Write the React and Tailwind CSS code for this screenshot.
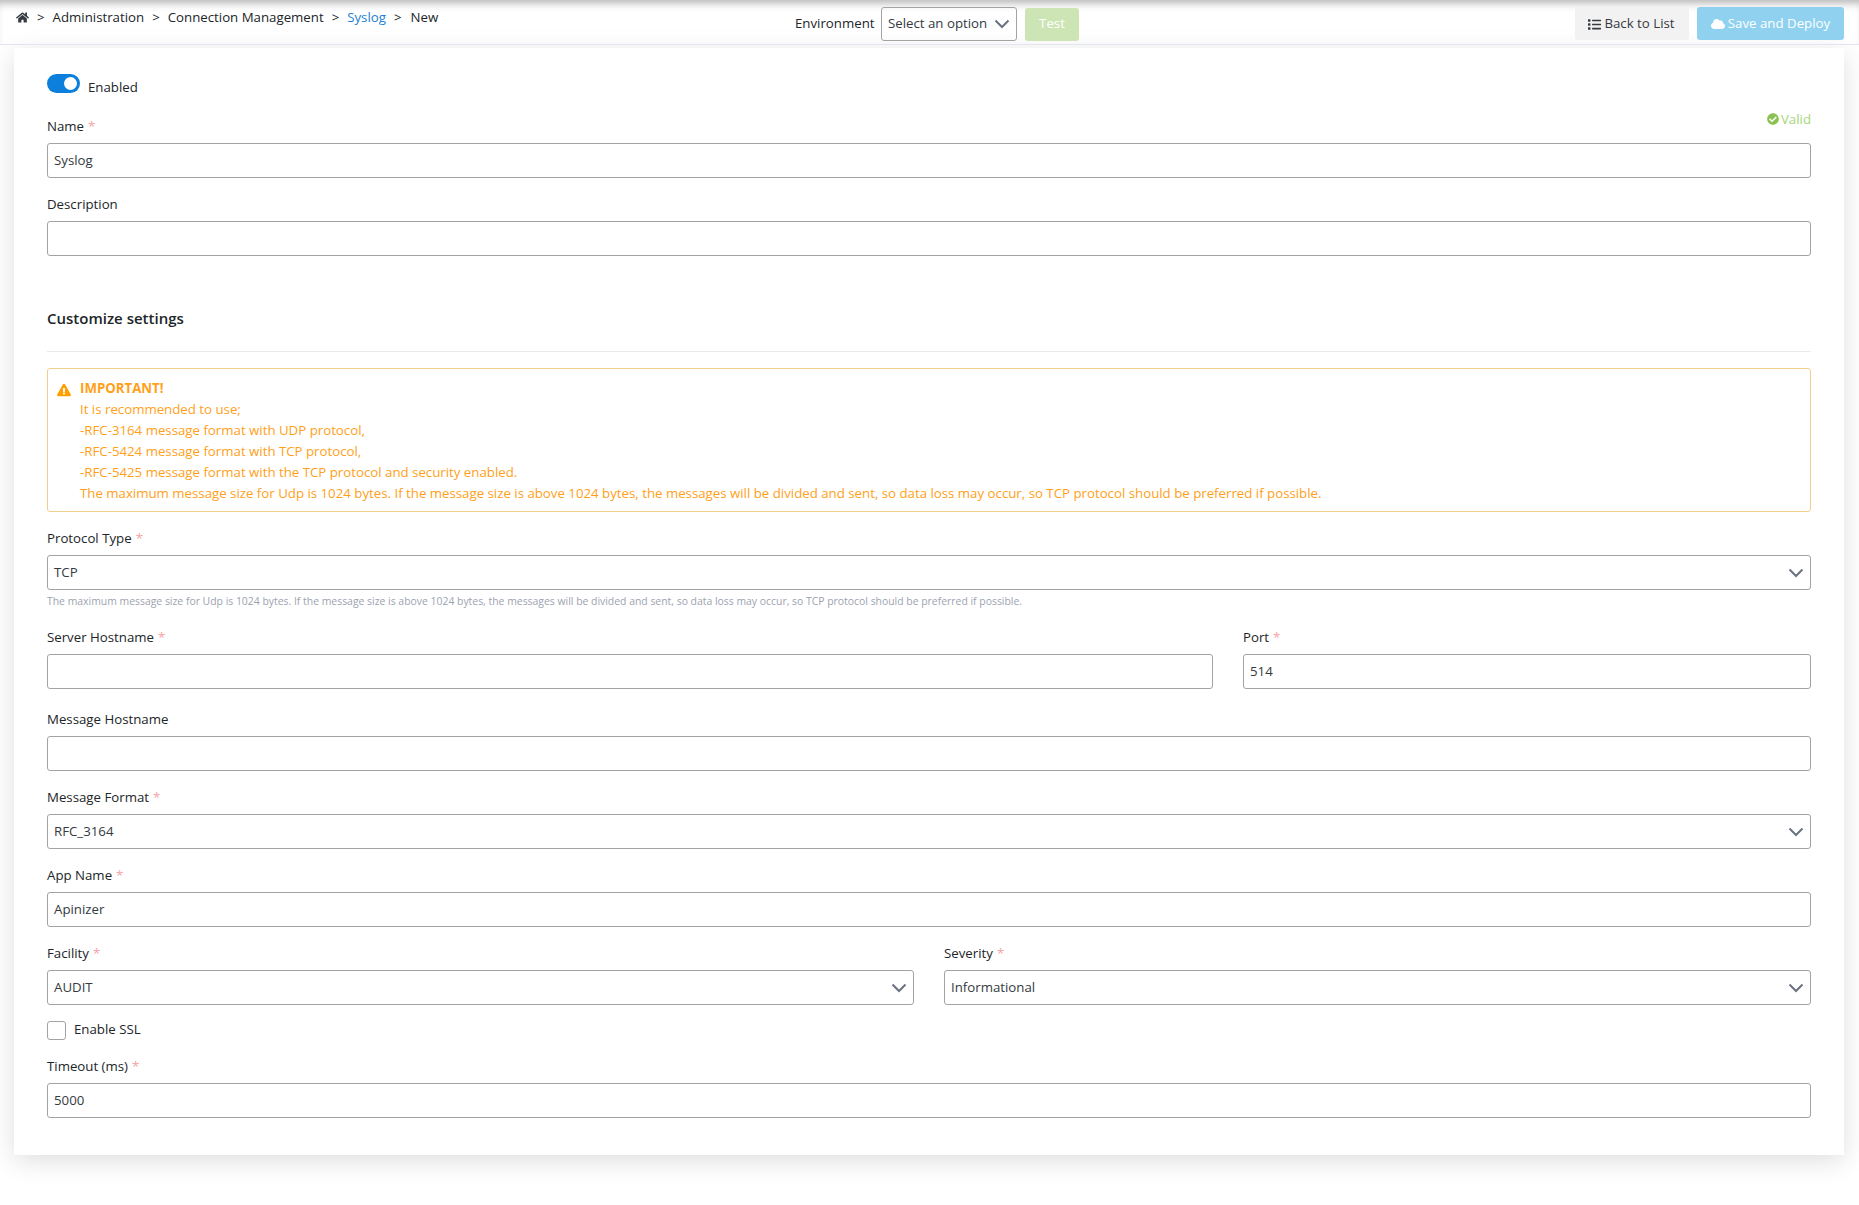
import React from 'react';
import { FaHome, FaList, FaCloud, FaCheckCircle, FaExclamationTriangle } from 'react-icons/fa';

const Chevron = () => (
  <svg width="16" height="10" viewBox="0 0 16 10" fill="none" stroke="#6b7280" strokeWidth="2">
    <path d="M1.5 1.5 8 8l6.5-6.5" />
  </svg>
);

const Label = ({ children, required }) => (
  <label className="block h-5 mb-[7px] leading-5 text-[#212529]">
    {children}
    {required && <span className="ml-1 text-[#f5a3a3]">*</span>}
  </label>
);

const Input = ({ value }) => (
  <div className="h-[35px] px-[6px] pt-[1px] flex items-center border border-[#a3a3a3] rounded-[3px] bg-white text-[#343a40]">
    {value}
  </div>
);

const Select = ({ value }) => (
  <div className="h-[35px] pl-[6px] pr-[6px] flex items-center justify-between border border-[#a3a3a3] rounded-[3px] bg-white text-[#343a40]">
    <span className="pt-[1px]">{value}</span>
    <Chevron />
  </div>
);

const Field = ({ label, required, value, select, className = 'mb-4' }) => (
  <div className={className}>
    <Label required={required}>{label}</Label>
    {select ? <Select value={value} /> : <Input value={value} />}
  </div>
);

const Sep = () => <span className="mx-[8px] text-[#212529]">&gt;</span>;

export default function App() {
  return (
    <div className="min-h-[1205px] bg-white text-[13.25px] font-['Open_Sans',sans-serif] text-[#212529]">
      {/* Top bar */}
      <div className="relative h-[45px] border-b border-[#e2e5ec] shadow-[inset_0_8px_8px_-5px_rgba(0,0,0,0.3)]">
        <div className="absolute left-[16px] top-[7px] flex items-center leading-5">
          <FaHome className="w-[13px] h-[13px] text-[#343a40]" />
          <Sep />
          <span>Administration</span>
          <Sep />
          <span>Connection Management</span>
          <Sep />
          <span className="text-[#1b7fd6]">Syslog</span>
          <Sep />
          <span className="ml-[1px]">New</span>
        </div>
        <div className="absolute left-[795px] top-[7px] flex items-center">
          <span className="w-[86px]">Environment</span>
          <div className="w-[136px] h-[34px] pl-[6px] pr-[6px] flex items-center justify-between border border-[#a3a3a3] rounded-[3px]">
            <span className="text-[#343a40]">Select an option</span>
            <Chevron />
          </div>
          <button className="ml-2 w-[54px] h-[33px] rounded-[3px] bg-[#cde5b5] text-white">Test</button>
        </div>
        <div className="absolute right-[15px] top-[7px] flex items-center gap-2">
          <button className="w-[114px] h-[33px] pt-[1px] pr-[1px] rounded-[3px] bg-[#f2f2f2] text-[#343a40] flex items-center justify-center gap-[3px]">
            <FaList className="w-[13px] h-[13px]" />
            Back to List
          </button>
          <button className="w-[147px] h-[33px] pt-[1px] rounded-[3px] bg-[#90d1f0] text-white flex items-center justify-center gap-[3px]">
            <FaCloud className="w-[14px] h-[14px]" />
            Save and Deploy
          </button>
        </div>
      </div>

      {/* Card */}
      <div className="ml-[14px] mr-[15px] mt-[3px] h-[1107px] px-[33px] pt-[28px] bg-white shadow-[0_6px_24px_rgba(0,0,0,0.13)]">
        <div className="flex items-center h-5 mb-[20px]">
          <div className="w-[33px] h-[19px] rounded-full bg-[#0c7fdc] relative -top-[3px]">
            <div className="absolute right-[3px] top-[3px] w-[13px] h-[13px] rounded-full bg-white" />
          </div>
          <span className="ml-2 relative top-[2px]">Enabled</span>
        </div>

        <div className="mb-4">
          <div className="flex justify-between">
            <Label required>Name</Label>
            <span className="relative -top-[7px] h-5 leading-5 flex items-center gap-[2px] text-[#a5d678]">
              <FaCheckCircle className="w-[12px] h-[12px] text-[#8cc152]" />
              Valid
            </span>
          </div>
          <Input value="Syslog" />
        </div>
        <Field label="Description" className="mb-0" />

        <h3 className="mt-[52px] h-5 leading-5 text-[15px] font-semibold text-[#212529]">Customize settings</h3>
        <hr className="mt-[23px] border-[#e9ecef]" />

        <div className="mt-4 h-[144px] pl-[32px] pt-[9px] relative border border-[#f3cf8e] rounded-[3px] text-[#ff9f1a] leading-[21px]">
          <FaExclamationTriangle className="absolute left-[9px] top-[14px] w-[14px] h-[14px] text-[#ff9f00]" />
          <div className="font-bold">IMPORTANT!</div>
          <div>It is recommended to use;</div>
          <div>-RFC-3164 message format with UDP protocol,</div>
          <div>-RFC-5424 message format with TCP protocol,</div>
          <div>-RFC-5425 message format with the TCP protocol and security enabled.</div>
          <div>The maximum message size for Udp is 1024 bytes. If the message size is above 1024 bytes, the messages will be divided and sent, so data loss may occur, so TCP protocol should be preferred if possible.</div>
        </div>

        <div className="mt-[16px]">
          <Label required>Protocol Type</Label>
          <Select value="TCP" />
          <p className="mt-[1px] h-[20px] leading-[20px] text-[10.42px] text-[#9ca3af]">
            The maximum message size for Udp is 1024 bytes. If the message size is above 1024 bytes, the messages will be divided and sent, so data loss may occur, so TCP protocol should be preferred if possible.
          </p>
        </div>

        <div className="mt-[16px] mb-[20px] flex gap-[30px]">
          <Field label="Server Hostname" required className="flex-1" />
          <Field label="Port" required value="514" className="w-[568px]" />
        </div>

        <Field label="Message Hostname" />
        <Field label="Message Format" required value="RFC_3164" select />
        <Field label="App Name" required value="Apinizer" />

        <div className="mb-[15px] flex gap-[30px]">
          <Field label="Facility" required value="AUDIT" select className="flex-1" />
          <Field label="Severity" required value="Informational" select className="flex-1" />
        </div>

        <div className="flex items-center h-5 mb-[16px]">
          <div className="w-[19px] h-[19px] border border-[#a3a3a3] rounded-[3px] bg-white" />
          <span className="ml-[8px]">Enable SSL</span>
        </div>

        <Field label="Timeout (ms)" required value="5000" />
      </div>
    </div>
  );
}
